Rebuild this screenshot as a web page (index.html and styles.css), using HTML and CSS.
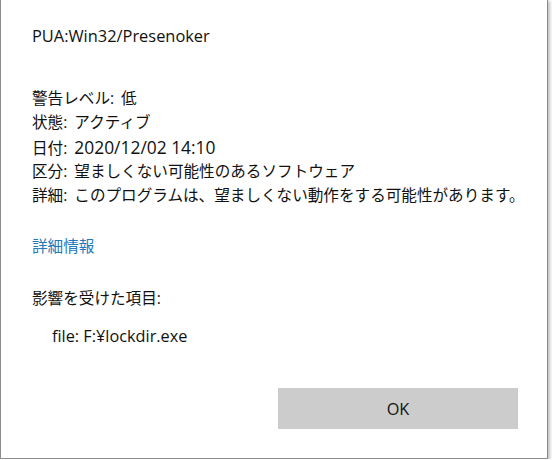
FILE: index.html
```html
<!DOCTYPE html>
<html lang="ja">
<head>
<meta charset="utf-8">
<link rel="stylesheet" href="styles.css">
</head>
<body>
<div class="frame">
  <div class="content">
    <div class="title">PUA:Win32/Presenoker</div>
    <div class="details">
      <div class="row">警告レベル: 低</div>
      <div class="row">状態: アクティブ</div>
      <div class="row">日付: <span class="date">2020/12/02 14:10</span></div>
      <div class="row">区分: 望ましくない可能性のあるソフトウェア</div>
      <div class="row">詳細: このプログラムは、望ましくない動作をする可能性があります。</div>
    </div>
    <a class="more" href="#">詳細情報</a>
    <div class="affected">影響を受けた項目:</div>
    <div class="file">file: F:¥lockdir.exe</div>
  </div>
  <div class="actions">
    <button class="ok">OK</button>
  </div>
</div>
</body>
</html>
```

FILE: styles.css
```css
html, body {
  margin: 0;
  padding: 0;
  background: #ffffff;
}
body {
  font-family: "Open Sans", "Noto Sans CJK JP", sans-serif;
  font-size: 15.6px;
  color: #111111;
}
.frame {
  box-sizing: border-box;
  width: 548px;
  height: 459px;
  border-left: 1px solid #8c8c8c;
  border-right: 1px solid #8c8c8c;
  border-bottom: 1px solid #8c8c8c;
  box-shadow: 2px 1px 3px rgba(0, 0, 0, 0.25);
  background: #fff;
  display: flex;
  flex-direction: column;
}
.content {
  padding: 24px 0 0 31px;
  line-height: 24px;
  flex: 1;
}
.title {
  font-size: 16.4px;
  margin-bottom: 38px;
}
.details .row {
  line-height: 24.3px;
  height: 24.3px;
  white-space: nowrap;
  word-spacing: 3px;
}
.date {
  font-size: 17.4px;
  word-spacing: 0;
}
.more {
  display: block;
  margin-top: 27px;
  color: #2279c0;
  text-decoration: none;
}
.affected {
  margin-top: 28px;
}
.file {
  margin-top: 14px;
  padding-left: 20px;
  font-size: 16.3px;
}
.actions {
  display: flex;
  justify-content: flex-end;
  padding: 0 29px 29px 0;
}
.ok {
  width: 240px;
  height: 41px;
  border: none;
  background: #cccccc;
  font-family: "Open Sans", "Noto Sans CJK JP", sans-serif;
  font-size: 16.3px;
  color: #111111;
}
```
